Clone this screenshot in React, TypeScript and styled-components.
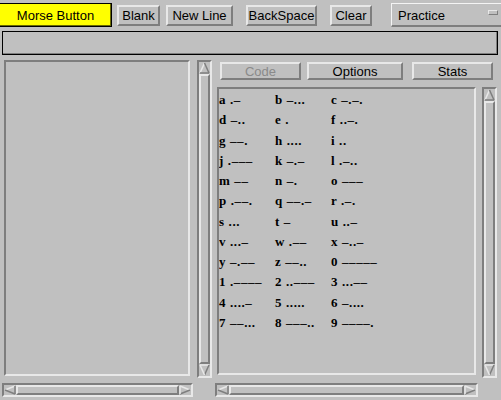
import styled, { createGlobalStyle, css } from "styled-components";

const BG = "#c0c0c0";
const LIGHT = "#e8e8e8";
const DARK = "#7e7e7e";

const GlobalStyle = createGlobalStyle`
  * { box-sizing: border-box; }
  html, body {
    margin: 0;
    padding: 0;
    background: ${BG};
  }
  body {
    width: 501px;
    height: 400px;
    overflow: hidden;
    font-family: "Liberation Sans", Arial, sans-serif;
    font-size: 13px;
    color: #000;
  }
`;

const bevel = (sunken: boolean) => css`
  border-style: solid;
  border-width: 2px;
  border-color: ${sunken
    ? `${DARK} ${LIGHT} ${LIGHT} ${DARK}`
    : `${LIGHT} ${DARK} ${DARK} ${LIGHT}`};
`;

const Window = styled.div`
  width: 501px;
  height: 400px;
  display: flex;
  flex-direction: column;
`;

const Toolbar = styled.div`
  display: flex;
  align-items: center;
  height: 24px;
  margin-top: 3px;
`;

const MorseButton = styled.button`
  width: 112px;
  height: 24px;
  background: #ffff00;
  border: 1px solid #000;
  border-left: none;
  box-shadow: inset -1px -1px 0 #6a6a00;
  font: inherit;
  padding: 0;
  display: flex;
  align-items: center;
  justify-content: center;
`;

const ToolButton = styled.button<{ $w: number; $ml: number }>`
  ${bevel(false)}
  width: ${(p) => p.$w}px;
  height: 21px;
  margin-left: ${(p) => p.$ml}px;
  margin-top: 1px;
  background: ${BG};
  font: inherit;
  padding: 0;
  display: flex;
  align-items: center;
  justify-content: center;
`;

const ModeBox = styled.div`
  width: 110px;
  height: 24px;
  margin-left: 19px;
  border-top: 1px solid #f4f4f4;
  border-left: 1px solid #f4f4f4;
  border-bottom: 2px solid ${DARK};
  display: flex;
  align-items: center;
  justify-content: space-between;
  padding: 1px 3px 0 6px;
`;

const ModeIndicator = styled.span`
  width: 10px;
  height: 5px;
  margin-bottom: 5px;
  border-top: 1px solid ${LIGHT};
  border-left: 1px solid ${LIGHT};
  border-bottom: 1px solid ${DARK};
  border-right: 1px solid ${DARK};
`;

const TextField = styled.div`
  width: 496px;
  height: 24px;
  margin: 4px 0 0 2px;
  border: 1px solid #000;
  box-shadow: inset -1px -1px 0 ${DARK};
  background: ${BG};
`;

const Main = styled.div`
  display: flex;
  gap: 3px;
  padding-left: 2px;
  margin-top: 5px;
`;

const Column = styled.div`
  display: flex;
  flex-direction: column;
`;

const TabRow = styled.div`
  display: flex;
  margin: 2px 0 7px 5px;
`;

const TabButton = styled.button<{ $w: number; $ml: number; $disabled?: boolean }>`
  ${bevel(false)}
  width: ${(p) => p.$w}px;
  height: 18px;
  margin-left: ${(p) => p.$ml}px;
  background: ${BG};
  font: inherit;
  color: ${(p) => (p.$disabled ? "#8a8a8a" : "#000")};
  padding: 0;
  display: flex;
  align-items: center;
  justify-content: center;
`;

const Pane = styled.div<{ $viewW: number; $gap: number }>`
  display: grid;
  grid-template-columns: 2px ${(p) => p.$viewW}px ${(p) => p.$gap}px 15px;
  row-gap: 5px;
  align-items: start;
`;

const View = styled.div<{ $h: number }>`
  ${bevel(true)}
  grid-column: 2;
  height: ${(p) => p.$h}px;
  background: ${BG};
  overflow: hidden;
`;

const VTrough = styled.div<{ $h: number }>`
  ${bevel(true)}
  grid-column: 4;
  width: 15px;
  height: ${(p) => p.$h}px;
  display: flex;
  flex-direction: column;
`;

const HTrough = styled.div<{ $w: number }>`
  ${bevel(true)}
  grid-column: 1 / -1;
  justify-self: start;
  width: ${(p) => p.$w}px;
  height: 14px;
  display: flex;
`;

const Thumb = styled.div`
  ${bevel(false)}
  flex: 1;
`;

const ArrowBox = styled.svg`
  display: block;
  flex: none;
`;

const MorseList = styled.div`
  display: grid;
  grid-template-columns: 56px 56px auto;
  padding: 1px 0 0 0;
  font-family: "Liberation Serif", "Times New Roman", serif;
  font-weight: bold;
  font-size: 13px;
  letter-spacing: 0.6px;
  line-height: 20.25px;
  white-space: pre;
`;

type Dir = "up" | "down" | "left" | "right";

function Arrow({ dir }: { dir: Dir }) {
  const v = dir === "up" || dir === "down";
  const w = v ? 11 : 12;
  const h = v ? 12 : 10;
  let pts: [number, number][];
  if (dir === "up") pts = [[1, 11], [5.5, 1], [10, 11]];
  else if (dir === "down") pts = [[1, 1], [10, 1], [5.5, 11]];
  else if (dir === "left") pts = [[11, 1], [1, 5], [11, 9]];
  else pts = [[1, 1], [11, 5], [1, 9]];
  const [a, b, c] = pts;
  return (
    <ArrowBox width={w} height={h} viewBox={`0 0 ${w} ${h}`}>
      <polygon points={pts.map((p) => p.join(",")).join(" ")} fill={BG} />
      <line x1={a[0]} y1={a[1]} x2={b[0]} y2={b[1]} stroke={LIGHT} strokeWidth={1.5} />
      <line x1={b[0]} y1={b[1]} x2={c[0]} y2={c[1]} stroke={DARK} strokeWidth={1.5} />
      <line x1={c[0]} y1={c[1]} x2={a[0]} y2={a[1]} stroke={dir === "down" || dir === "right" ? LIGHT : DARK} strokeWidth={1.5} />
    </ArrowBox>
  );
}

function VScroll({ h }: { h: number }) {
  return (
    <VTrough $h={h}>
      <Arrow dir="up" />
      <Thumb />
      <Arrow dir="down" />
    </VTrough>
  );
}

function HScroll({ w }: { w: number }) {
  return (
    <HTrough $w={w}>
      <Arrow dir="left" />
      <Thumb />
      <Arrow dir="right" />
    </HTrough>
  );
}

const codes: [string, string][] = [
  ["a", ".–"], ["b", "–..."], ["c", "–.–."],
  ["d", "–.."], ["e", "."], ["f", "..–."],
  ["g", "––."], ["h", "...."], ["i", ".."],
  ["j", ".–––"], ["k", "–.–"], ["l", ".–.."],
  ["m", "––"], ["n", "–."], ["o", "–––"],
  ["p", ".––."], ["q", "––.–"], ["r", ".–."],
  ["s", "..."], ["t", "–"], ["u", "..–"],
  ["v", "...–"], ["w", ".––"], ["x", "–..–"],
  ["y", "–.––"], ["z", "––.."], ["0", "–––––"],
  ["1", ".––––"], ["2", "..–––"], ["3", "...––"],
  ["4", "....–"], ["5", "....."], ["6", "–...."],
  ["7", "––..."], ["8", "–––.."], ["9", "––––."],
];

export default function App() {
  return (
    <Window>
      <GlobalStyle />
      <Toolbar>
        <MorseButton>Morse Button</MorseButton>
        <ToolButton $w={43} $ml={5}>Blank</ToolButton>
        <ToolButton $w={67} $ml={6}>New Line</ToolButton>
        <ToolButton $w={71} $ml={13}>BackSpace</ToolButton>
        <ToolButton $w={42} $ml={13}>Clear</ToolButton>
        <ModeBox>
          Practice
          <ModeIndicator />
        </ModeBox>
      </Toolbar>
      <TextField />
      <Main>
        <Pane $viewW={186} $gap={7}>
          <View $h={316} />
          <VScroll h={318} />
          <HScroll w={191} />
        </Pane>
        <Column>
          <TabRow>
            <TabButton $w={81} $ml={0} $disabled>Code</TabButton>
            <TabButton $w={96} $ml={6}>Options</TabButton>
            <TabButton $w={81} $ml={9}>Stats</TabButton>
          </TabRow>
          <Pane $viewW={259} $gap={6}>
            <View $h={288}>
              <MorseList>
                {codes.map(([ch, code]) => (
                  <span key={ch}>
                    {ch} {code}
                  </span>
                ))}
              </MorseList>
            </View>
            <VScroll h={291} />
            <HScroll w={263} />
          </Pane>
        </Column>
      </Main>
    </Window>
  );
}
